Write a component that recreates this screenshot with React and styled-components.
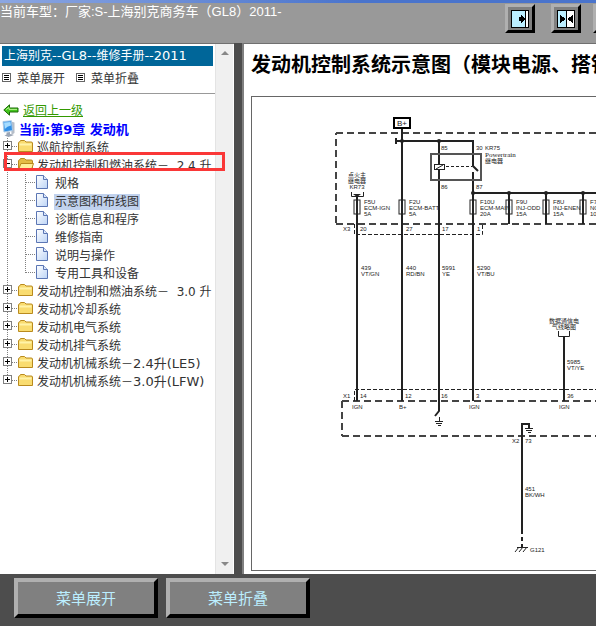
import React from "react"
import styled, { createGlobalStyle } from "styled-components"

const chapters = [
  { name: "巡航控制系统" },
  {
    name: "发动机控制和燃油系统－\u00a0 2.4 升",
    marked: true,
    pages: [
      { name: "规格" },
      { name: "示意图和布线图", selected: true },
      { name: "诊断信息和程序" },
      { name: "维修指南" },
      { name: "说明与操作" },
      { name: "专用工具和设备" },
    ],
  },
  { name: "发动机控制和燃油系统－\u00a0 3.0 升" },
  { name: "发动机冷却系统" },
  { name: "发动机电气系统" },
  { name: "发动机排气系统" },
  { name: "发动机机械系统－", suffix: "2.4升(LE5)" },
  { name: "发动机机械系统－", suffix: "3.0升(LFW)" },
]

const fuses = [
  { x: 357, lines: ["F5U", "ECM-IGN", "5A"] },
  { x: 402, lines: ["F2U", "ECM-BATT", "5A"] },
  { x: 473, lines: ["F10U", "ECM-MAIN", "20A"] },
  { x: 509, lines: ["F9U", "INJ-ODD", "15A"] },
  { x: 546, lines: ["F8U", "INJ-ENEN", "15A"] },
  { x: 583, lines: ["F7U", "NOX", "10A"] },
]

const wires = [
  { x: 361, y: 270, lines: ["439", "VT/GN"] },
  { x: 406, y: 270, lines: ["440", "RD/BN"] },
  { x: 442, y: 270, lines: ["5991", "YE"] },
  { x: 477, y: 270, lines: ["5290", "VT/BU"] },
  { x: 567, y: 364, lines: ["5985", "VT/YE"] },
  { x: 525, y: 491, lines: ["451", "BK/WH"] },
]

const pins = [
  [343, 231, "X3"],
  [360, 231, "20"],
  [406, 231, "27"],
  [442, 231, "17"],
  [477, 231, "1"],
  [441, 150, "85"],
  [476, 150, "30"],
  [485, 150, "KR75"],
  [441, 189, "86"],
  [476, 189, "87"],
  [343, 398, "X1"],
  [360, 398, "14"],
  [405, 398, "12"],
  [441, 398, "16"],
  [476, 398, "3"],
  [567, 398, "36"],
  [352, 409, "IGN"],
  [399, 409, "B+"],
  [469, 409, "IGN"],
  [559, 409, "IGN"],
  [512, 443, "X2"],
  [525, 443, "73"],
  [530, 552, "G121"],
]

const ToggleIcon = ({ open, last }) => (
  <svg width="18" height="18" shapeRendering="crispEdges">
    <path
      d={`M7.5 0V${last ? 8 : 18}M12 8.5H18`}
      stroke="#808080"
      strokeDasharray="1 1"
    />
    <rect x="3.5" y="3.5" width="8" height="8" fill="#fff" stroke="#808080" />
    <path d={open ? "M5 7.5H10" : "M5 7.5H10M7.5 5V10"} stroke="#000" />
  </svg>
)

const FolderIcon = ({ open }) => (
  <svg width="16" height="18">
    <path
      d="M.5 5Q.5 4 1.5 4L2.5 2.5H6.5L8 4H13Q14.5 4 14.5 5V13.5H.5Z"
      fill={open ? "#e4bc45" : "#f9dc70"}
      stroke="#b98a1e"
    />
    {open ? (
      <path d="M.5 13.5L3 7.5H15.5L13.5 13.5Z" fill="#fff09a" stroke="#b98a1e" />
    ) : (
      <path d="M1.5 5.5H13.5V7.5H1.5Z" fill="#fff3a8" />
    )}
  </svg>
)

const BranchIcon = ({ last }) => (
  <svg width="18" height="18" shapeRendering="crispEdges">
    <path
      d={`M7.5 0V${last ? 9 : 18}M8 8.5H18`}
      stroke="#808080"
      strokeDasharray="1 1"
    />
  </svg>
)

const TrunkIcon = () => (
  <svg width="18" height="18" shapeRendering="crispEdges">
    <path d="M7.5 0V18" stroke="#808080" strokeDasharray="1 1" />
  </svg>
)

const PageIcon = () => (
  <svg width="12" height="18">
    <defs>
      <linearGradient id="page" x1="0" y1="0" x2="1" y2="1">
        <stop offset="0" stopColor="#fff" />
        <stop offset="1" stopColor="#bcd4f6" />
      </linearGradient>
    </defs>
    <path d="M.5 1.5H7.5L11.5 5.5V14.5H.5Z" fill="url(#page)" stroke="#5b76b4" />
    <path d="M7.5 1.5V5.5H11.5" fill="#dce8fb" stroke="#5b76b4" />
  </svg>
)

const ListIcon = () => (
  <svg width="9" height="9" shapeRendering="crispEdges">
    <rect x=".5" y=".5" width="8" height="8" fill="#fff" stroke="#666" />
    <path d="M2 2.5H7M2 4.5H7M2 6.5H7" stroke="#000" />
  </svg>
)

const BackIcon = () => (
  <svg width="16" height="12">
    <path
      d="M.8 6L6.5 .8V4H15V8H6.5V11.2Z"
      fill="#43c51c"
      stroke="#1c6b08"
    />
    <path d="M3 5.6L6 3.4V5.4H14" fill="none" stroke="#b7f28e" />
  </svg>
)

const ComputerIcon = () => (
  <svg width="13" height="18">
    <path d="M9 1.5L12.5 2.5V13L9.5 15Z" fill="#b5bdc8" />
    <path d="M1 1.5L9.5 .8L10.5 10.5L2 12Z" fill="#2f8fe6" stroke="#a9c9e6" />
    <path d="M2 2.5L8.5 2L9 5.5Q5 6 2.8 9Z" fill="#a5dcff" />
    <path d="M4.5 12.5L8 12V14L12 15L6.5 17L2.5 15.5L4.5 14.5Z" fill="#9aa5b5" />
  </svg>
)

const ShowPaneIcon = () => (
  <svg width="18" height="18" shapeRendering="crispEdges">
    <rect x=".5" y=".5" width="17" height="17" fill="#bef" stroke="#000" />
    <path d="M14 1H17V17H14Z" fill="#fff" />
    <path d="M14.5 1V17" stroke="#000" />
    <path d="M8 7H10V5H11V6H12V7H13V8H14V10H13V11H12V12H11V13H10V11H8Z" />
  </svg>
)

const SplitPaneIcon = () => (
  <svg width="18" height="18" shapeRendering="crispEdges">
    <rect x=".5" y=".5" width="17" height="17" fill="#fff" stroke="#000" />
    <path d="M1 1H9V17H1Z" fill="#bef" />
    <path d="M9.5 1V17" stroke="#000" />
    <path d="M3 5H4V6H5V7H7V8H8V10H7V11H5V12H4V13H3ZM16 5H15V6H14V7H12V8H11V10H12V11H14V12H15V13H16Z" />
  </svg>
)

const ScrollArrow = ({ down }) => (
  <svg width="8" height="4">
    <path d={down ? "M0 0H8L4 4Z" : "M0 4H8L4 0Z"} fill="#888" />
  </svg>
)

const TextLines = ({ x, y, lines, ...rest }) =>
  lines.map((line, i) => (
    <text key={i} x={x} y={y + i * 6} {...rest}>
      {line}
    </text>
  ))

const Schematic = () => (
  <StyledSchematic
    viewBox="252 97 700 473"
    width="700"
    height="473"
    role="img"
    aria-label="发动机控制系统示意图"
  >
    {/* fuse block and control module outlines */}
    <g fill="none" stroke="#444" strokeWidth="2">
      <path d="M336 223V133" strokeDasharray="7 4" />
      <path d="M336 133H952M336 224H952" strokeDasharray="7 4" />
      <path d="M342 401V436" strokeDasharray="7 4" />
      <path d="M342 401H952M342 436H952" strokeDasharray="7 4" />
      <path
        d="M354.5 224V234.5H482.5V225M354.5 401V389.5H952"
        stroke="#222"
        strokeDasharray="4 2"
        strokeWidth="1"
      />
    </g>

    {/* wires */}
    <g fill="none" stroke="#222" strokeWidth="2">
      <path d="M357 194V401M402 129V401M439 141V164M439 170V411L435 416" />
      <path d="M396 141H473M473 140V166L478 171M473 172V401" />
      <path d="M396 138V144M472 193H952M509 193V224M546 193V224M583 193V224" />
      <path d="M564 337V401" />
      <path d="M558.5 331V336.5H569.5V331" strokeWidth="1" />
      <path d="M351.5 192V196.5H363.5V192" strokeWidth="1" />
      <path d="M522 534V424H529V428" />
      <path d="M522 537V541M522 544V547" />
    </g>

    {/* ground symbols */}
    <g fill="none" stroke="#222">
      <path d="M439.5 417V422M435 421.5H443M436 423.5H442M438 425.5H441" />
      <path d="M525 428.5H533M526 430.5H532M528 432.5H531" />
      <path d="M517 547.5H528M519 547L515 552M523 547L519 552M527 547L523 552" />
    </g>
    <g fill="#222">
      <circle cx="402" cy="141" r="2" />
      <circle cx="439" cy="141" r="2" />
      <circle cx="473" cy="193" r="2" />
      <circle cx="509" cy="193" r="2" />
      <circle cx="546" cy="193" r="2" />
      <circle cx="583" cy="193" r="2" />
      <path d="M353 194H361L357 197Z" />
    </g>

    {/* relay */}
    <rect x="431" y="154" width="50" height="26" fill="none" stroke="#555" strokeWidth="2" />
    <rect x="434.5" y="164.5" width="10" height="5" fill="#fff" stroke="#222" />
    <path d="M436 169L443 165" stroke="#222" />
    <path d="M446 166.5H472" stroke="#222" strokeDasharray="3 2" />

    <rect x="394" y="118" width="16" height="10" fill="#fff" stroke="#000" strokeWidth="2" />
    <text x="402" y="126" fontSize="8" textAnchor="middle">
      B+
    </text>

    {fuses.map(({ x, lines }) => (
      <g key={x}>
        <rect
          x={x - 3}
          y="200"
          width="6"
          height="14"
          fill="none"
          stroke="#222"
        />
        <TextLines x={x + 7} y={204} lines={lines} />
      </g>
    ))}
    {wires.map((wire) => (
      <TextLines key={wire.lines[0]} {...wire} />
    ))}
    {pins.map(([x, y, label]) => (
      <text key={`${x}-${y}`} x={x} y={y}>
        {label}
      </text>
    ))}
    <TextLines x={357} y={177} lines={["点火主", "继电器", "KR73"]} textAnchor="middle" />
    <text x="485" y="157" fontSize="7" fontFamily="Liberation Serif, serif">
      Powertrain
    </text>
    <text x="485" y="163">继电器</text>
    <TextLines x={564} y={323} lines={["数据通信电", "气线略图"]} textAnchor="middle" />
  </StyledSchematic>
)

const Chapter = ({ chapter, last }) => (
  <li>
    <StyledRow>
      <StyledToggle aria-label={chapter.pages ? "折叠" : "展开"}>
        <ToggleIcon open={!!chapter.pages} last={last} />
      </StyledToggle>
      <FolderIcon open={!!chapter.pages} />
      <StyledLabel href="#">
        {chapter.name}
        {chapter.suffix && <StyledLatin>{chapter.suffix}</StyledLatin>}
      </StyledLabel>
      {chapter.marked && <StyledMarker />}
    </StyledRow>
    {chapter.pages && (
      <StyledList>
        {chapter.pages.map((page, i) => (
          <li key={page.name}>
            <StyledRow>
              <TrunkIcon />
              <BranchIcon last={i === chapter.pages.length - 1} />
              <PageIcon />
              <StyledPageLabel href="#" $selected={page.selected}>
                {page.name}
              </StyledPageLabel>
            </StyledRow>
          </li>
        ))}
      </StyledList>
    )}
  </li>
)

const App = () => (
  <StyledPage>
    <GlobalStyle />
    <StyledHeader>
      <StyledVehicle>当前车型：厂家:S-上海别克商务车（GL8）2011-</StyledVehicle>
      <StyledToolbar>
        <StyledToolPair>
          <StyledIconButton aria-label="展开">
            <ShowPaneIcon />
          </StyledIconButton>
          <StyledIconButton aria-label="分栏">
            <SplitPaneIcon />
          </StyledIconButton>
        </StyledToolPair>
        <StyledIconButton aria-label="折叠">
          <ShowPaneIcon />
        </StyledIconButton>
      </StyledToolbar>
    </StyledHeader>

    <StyledMain>
      <StyledSidebar>
        <StyledNav>
          <StyledManualTitle>
            上海别克<StyledLatin>--GL8--</StyledLatin>维修手册
            <StyledLatin>--2011</StyledLatin>
          </StyledManualTitle>
          <StyledMenuLinks>
            <a href="#">
              <ListIcon />
              菜单展开
            </a>
            <a href="#">
              <ListIcon />
              菜单折叠
            </a>
          </StyledMenuLinks>
          <StyledDivider />
          <StyledBackRow>
            <BackIcon />
            <a href="#">返回上一级</a>
          </StyledBackRow>
          <StyledCurrentRow>
            <ComputerIcon />
            <span>当前:第9章 发动机</span>
          </StyledCurrentRow>
          <StyledList>
            {chapters.map((chapter, i) => (
              <Chapter
                key={i}
                chapter={chapter}
                last={i === chapters.length - 1}
              />
            ))}
          </StyledList>
        </StyledNav>
        <StyledScrollbar>
          <ScrollArrow />
          <ScrollArrow down />
        </StyledScrollbar>
      </StyledSidebar>

      <StyledContent>
        <h1>发动机控制系统示意图（模块电源、搭铁）</h1>
        <StyledFigure>
          <Schematic />
        </StyledFigure>
      </StyledContent>
    </StyledMain>

    <StyledFooter>
      <StyledFooterButton>菜单展开</StyledFooterButton>
      <StyledFooterButton>菜单折叠</StyledFooterButton>
    </StyledFooter>
  </StyledPage>
)

const GlobalStyle = createGlobalStyle`
  * {
    box-sizing: border-box;
  }

  body {
    margin: 0;
    color: #333;
    font: 12px "DejaVu Sans", "Noto Sans CJK SC", sans-serif;
  }

  svg {
    display: block;
    flex: none;
  }
`

const StyledPage = styled.div`
  display: flex;
  flex-direction: column;
  min-height: 100vh;
  overflow: hidden;
  background: #4d4d4d;
`

const StyledHeader = styled.header`
  display: flex;
  justify-content: space-between;
  height: 43px;
  background: linear-gradient(90deg, #8ba6e2, #4a74cc 60%) top / 100% 3px
    no-repeat #999;
`

const StyledVehicle = styled.div`
  padding-top: 4px;
  color: #fff;
  font: 13px/16px "Liberation Sans", "Noto Sans CJK SC", sans-serif;
  white-space: nowrap;
`

const StyledToolbar = styled.div`
  display: flex;
  gap: 12px;
  width: 91px;
  flex: none;
  padding-top: 4px;
  overflow: hidden;
`

const StyledToolPair = styled.div`
  display: flex;
  gap: 16px;
`

const bevel = `
  border-style: solid;
  border-color: #b0b0b0 #000 #000 #b0b0b0;
  background: #808080;
  cursor: pointer;
`

const StyledIconButton = styled.button`
  ${bevel}
  display: flex;
  align-items: center;
  justify-content: center;
  flex: none;
  width: 30px;
  height: 29px;
  padding: 0;
  border-width: 3px;
`

const StyledMain = styled.main`
  display: flex;
  flex: 1;
  gap: 8px;
`

const StyledSidebar = styled.aside`
  display: flex;
  flex: none;
  width: 234px;
  border-top: 1px solid #707070;
  background: #fff;
`

const StyledNav = styled.nav`
  flex: 1;
  padding-top: 2px;
`

const StyledManualTitle = styled.div`
  height: 20px;
  margin: 0 2px;
  padding-left: 2px;
  background: #069;
  color: #fff;
  line-height: 20px;
`

const StyledLatin = styled.span`
  font-size: 13px;
`

const StyledMenuLinks = styled.div`
  display: flex;
  gap: 11px;
  height: 22px;
  padding-left: 2px;

  a {
    display: flex;
    align-items: center;
    gap: 6px;
    color: #333;
    text-decoration: none;
  }
`

const StyledDivider = styled.hr`
  margin: 5px 0 6px;
  border: 0;
  border-top: 1px solid #999;
`

const StyledBackRow = styled.div`
  display: flex;
  align-items: center;
  gap: 4px;
  height: 19px;
  padding-left: 3px;

  a {
    color: #390;
  }
`

const StyledCurrentRow = styled.div`
  display: flex;
  align-items: center;
  gap: 4px;
  height: 19px;
  padding-left: 2px;
  color: #00f;
  font-size: 13px;
  font-weight: 700;
`

const StyledList = styled.ul`
  margin: 0;
  padding: 0;
  list-style: none;
`

const StyledRow = styled.div`
  position: relative;
  display: flex;
  align-items: center;
  height: 18px;
  white-space: nowrap;
`

const StyledToggle = styled.button`
  padding: 0;
  border: 0;
  background: none;
  cursor: pointer;
`

const StyledLabel = styled.a`
  margin: 2px 0 0 3px;
  color: #333;
  line-height: 16px;
  text-decoration: none;
`

const StyledPageLabel = styled(StyledLabel)`
  margin-left: 6px;
  padding: 0 1px;
  background: ${({ $selected }) => ($selected ? "#c1d2ee" : "none")};
`

const StyledMarker = styled.span`
  position: absolute;
  top: -4px;
  left: 4px;
  width: 221px;
  height: 19px;
  border: 3px solid #fa3737;
  pointer-events: none;
`

const StyledScrollbar = styled.div`
  display: flex;
  flex-direction: column;
  align-items: center;
  justify-content: space-between;
  width: 18px;
  margin-right: 1px;
  padding: 7px 0 8px;
  border-left: 1px solid #e4e4e4;
  background: #f0f0f0;
`

const StyledContent = styled.section`
  flex: 1;
  min-width: 0;
  padding: 0 0 3px 7px;
  border-top: 1px solid #707070;
  border-left: 2px solid #808080;
  background: #fff;
  overflow: hidden;

  h1 {
    margin: 0;
    padding: 5px 0 17px;
    color: #000;
    font: 700 20px/30px "Noto Sans CJK SC", sans-serif;
    white-space: nowrap;
  }
`

const StyledFigure = styled.figure`
  width: max-content;
  margin: 0;
  border: 1px solid #666;
`

const StyledSchematic = styled.svg`
  font: 6px "Liberation Sans", "Noto Sans CJK SC", sans-serif;
  fill: #222;
`

const StyledFooter = styled.footer`
  display: flex;
  gap: 8px;
  height: 52px;
  padding: 4px 14px 8px;
`

const StyledFooterButton = styled.button`
  ${bevel}
  width: 144px;
  padding: 0 0 2px;
  border-width: 4px;
  color: #bef;
  font: 15px "Noto Sans CJK SC", sans-serif;
`

export default App
